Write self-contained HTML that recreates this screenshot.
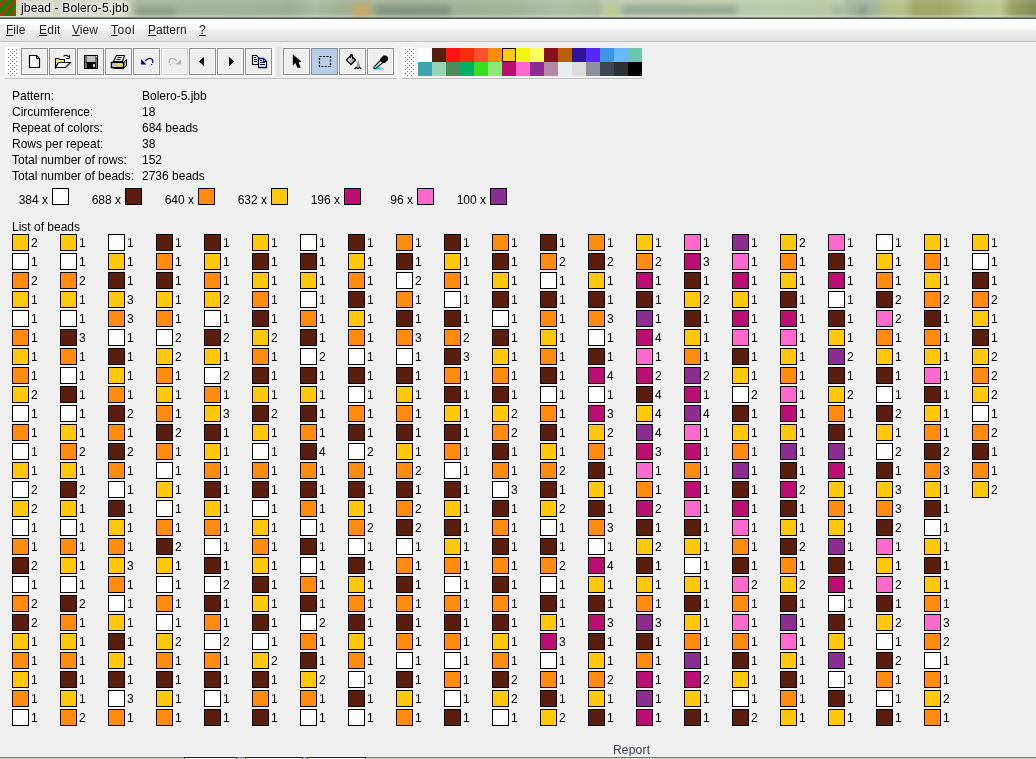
<!DOCTYPE html>
<html lang="en"><head><meta charset="utf-8"><title>jbead - Bolero-5.jbb</title>
<style>
*{margin:0;padding:0;box-sizing:border-box}
html,body{width:1036px;height:759px;overflow:hidden;background:#f0f0f0;font-family:"Liberation Sans",sans-serif;font-size:12px;color:#000}
body{position:relative}
#w{position:absolute;left:0;top:0;width:1036px;height:759px;will-change:transform}
.titlebar{position:absolute;left:0;top:0;width:1036px;height:19px;overflow:hidden;background:linear-gradient(90deg,#d2d4c6 0,#d2d4c6 118px,#a6b59d 138px,#a3b39a 256px,#9cae93 290px,#a9bca0 315px,#9eb195 345px,#a0b296 460px,#a4b69a 520px,#afc0a4 560px,#a6b89d 598px,#b8c7ab 604px,#bac9ab 700px,#bccbab 776px,#b9c8a6 840px,#a3b59c 850px,#a3b59c 874px,#b6c088 890px,#b8c18a 903px,#9fa76a 915px,#9ea669 940px,#a8b073 958px,#b8c28c 975px,#bcc690 1000px,#9aa268 1012px,#848c58 1036px)}
.titlebar:before{content:'';position:absolute;left:0;top:0;width:1036px;height:19px;background:linear-gradient(rgba(255,255,255,.10) 0,rgba(255,255,255,0) 6px,rgba(255,255,255,0) 14px,rgba(255,255,255,.28) 16px,rgba(255,255,255,.28) 17px,rgba(60,66,58,.0) 17px)}
.tline{position:absolute;left:0;top:17px;width:1036px;height:2px;background:linear-gradient(#7d8578 0,#7d8578 50%,#555b52 50%,#555b52 100%)}
.blob{position:absolute;filter:blur(3px);border-radius:3px;opacity:.85}
.appicon{position:absolute;left:0;top:0;width:16px;height:16px;background:repeating-linear-gradient(135deg,#0c880c 0,#0c880c 2.6px,#d62608 3.1px,#d62608 5.0px,#0c880c 5.5px,#0c880c 7.07px)}
.title{position:absolute;left:21px;top:0;font-size:12px;line-height:16px;letter-spacing:0.15px;color:#000;text-shadow:0 0 5px #fff,0 0 7px #fff,0 0 9px #fff}
.menubar{position:absolute;left:0;top:19px;width:1036px;height:23px;background:linear-gradient(#ffffff 0%,#f8f8f8 45%,#ebebeb 55%,#e2e2e2 100%);border-bottom:1px solid #c6c6c6}
.menubar span{position:absolute;top:4px;font-size:12px;line-height:14px;color:#222}
.tb1{position:absolute;left:5px;top:47px;width:392px;height:30px;background:linear-gradient(90deg,#ffffff 0,#ffffff 11px,#f7f7f7 16px,#f6f6f6 100%);box-shadow:0 2px 0 -0px #f0f0f0,0 2px 0 0 #f0f0f0}
.tb1:after,.tb2:after{content:'';position:absolute;left:0;right:0;top:31px;height:1px;background:#c2c2c2}
.tb2{position:absolute;left:402px;top:47px;width:242px;height:30px;background:linear-gradient(90deg,#ffffff 0,#ffffff 11px,#f3f3f3 16px,#f1f1f1 100%)}
.grip{position:absolute;left:3px;top:2px;width:9px;height:27px}
.btn{position:absolute;top:1px;width:27px;height:27px;border:1px solid #8e8e8e;background:#eeeeee;box-shadow:inset 0 0 0 1px #f8f8f8}
.btn.on{background:#b8cfe5;border-color:#7f8e9e;box-shadow:none}
.btn.dis{border-color:#cdcdcd}
.ico{position:absolute;left:0;top:0}
.sep{position:absolute;left:268px;top:0;width:10px;height:30px;background:linear-gradient(90deg,#fbfbfb,#dfdfdf 55%,#f4f4f4)}
.btn svg{position:absolute;left:0;top:0;width:25px;height:25px}
.pc{position:absolute;width:14px;height:14px;display:block}
.psel{position:absolute;left:100px;top:1px;width:14px;height:14px;border:1.5px solid #000;display:block}
.info .l{position:absolute;left:12px;height:16px;line-height:16px;white-space:nowrap}
.info .v{position:absolute;left:130px}
.cn{position:absolute;top:192px;width:60px;text-align:right;line-height:16px;white-space:nowrap}
.sw{position:absolute;width:17px;height:17px;border:1px solid #000;display:block}
.lob{position:absolute;left:12px;top:219px;line-height:16px}
.col{position:absolute;top:234px;width:40px}
.col p{height:19px;line-height:18px;white-space:nowrap;padding-left:19px;position:relative}
.col i{position:absolute;left:0;top:0;width:17px;height:17px;border:1px solid #000;display:block}
.W{background:#ffffff}.B{background:#5a1e0f}.O{background:#ff8c0f}.Y{background:#ffc80a}.M{background:#b90f73}.P{background:#ff69cd}.V{background:#8c2d91}
.report{position:absolute;left:613px;top:742px;line-height:16px;color:#333c48;font-size:12px;letter-spacing:0.2px}
.botline{position:absolute;left:0;top:756px;width:1036px;height:2px;background:linear-gradient(#f9f9f9 0,#f9f9f9 50%,#6e7762 50%,#6e7762 100%)}
.botline2{position:absolute;left:0;top:758px;width:1036px;height:1px;background:#d9dbc8}
.bx{position:absolute;top:757px;height:2px;background:#fff;border-top:1px solid #1c1c18;border-left:1px solid #555;border-right:1px solid #555}
</style></head>
<body>
<div id="w">
<div class="titlebar"><i class="blob" style="left:136px;top:8px;width:40px;height:6px;background:#7f917d"></i><i class="blob" style="left:353px;top:3px;width:18px;height:15px;background:#cfa763"></i><i class="blob" style="left:375px;top:7px;width:76px;height:7px;background:#6f8572"></i><i class="blob" style="left:606px;top:4px;width:10px;height:13px;background:#c8cc8a"></i><i class="blob" style="left:622px;top:7px;width:116px;height:6px;background:#7e9283"></i><i class="blob" style="left:834px;top:8px;width:6px;height:6px;background:#86968a"></i><i class="blob" style="left:858px;top:7px;width:9px;height:7px;background:#7a8a80"></i><div class="appicon"></div><span class="title">jbead - Bolero-5.jbb</span><div class="tline"></div></div>
<div class="menubar"><span style="left:6px"><u>F</u>ile</span><span style="left:39px;letter-spacing:.25px"><u>E</u>dit</span><span style="left:72px"><u>V</u>iew</span><span style="left:111px;letter-spacing:.55px"><u>T</u>ool</span><span style="left:148px"><u>P</u>attern</span><span style="left:199px"><u>?</u></span></div>
<div class="tb1"><svg class="grip" width="9" height="27" viewBox="0 0 9 27" shape-rendering="crispEdges"><defs><pattern id="gp1" width="4" height="4" patternUnits="userSpaceOnUse"><rect x="0" y="0" width="1" height="1" fill="#858585"/><rect x="2" y="2" width="1" height="1" fill="#858585"/></pattern></defs><rect width="9" height="27" fill="url(#gp1)"/></svg>
<div class="btn" style="left:16px"></div>
<div class="btn" style="left:44px"></div>
<div class="btn" style="left:72px"></div>
<div class="btn" style="left:100px"></div>
<div class="btn" style="left:128px"></div>
<div class="btn dis" style="left:156px"></div>
<div class="btn" style="left:184px"></div>
<div class="btn" style="left:212px"></div>
<div class="btn" style="left:240px"></div>
<div class="sep"></div>
<div class="btn" style="left:278px"></div>
<div class="btn on" style="left:306px"></div>
<div class="btn" style="left:334px"></div>
<div class="btn" style="left:362px"></div>
</div>
<svg class="ico" width="400" height="90" viewBox="0 0 400 90" fill="none" stroke-linecap="square">
<!-- new -->
<path d="M29.5 55.5H36.5L39.5 58.5V67.5H29.5Z" fill="#fff" stroke="#000" stroke-width="1.2"/>
<path d="M36.5 55.5V58.5H39.5" stroke="#000" stroke-width="1"/>
<!-- open -->
<path d="M55.5 67.5V58.5H58.5L59.5 59.5H64.5V62.5H58.5Z" fill="#f4f478" stroke="#000" stroke-width="1.1"/>
<path d="M55.5 67.5L58.5 62.5H70.5L65.5 67.5Z" fill="#fff" stroke="#000" stroke-width="1.1"/>
<path d="M63.5 56.5Q66 53.8 68.8 57" stroke="#000" stroke-width="1.1" stroke-linecap="butt"/>
<path d="M66.5 58.5H69.5V55.5" stroke="#000" stroke-width="1"/>
<!-- save -->
<rect x="84" y="55" width="14" height="14" fill="#000"/>
<rect x="85" y="56" width="12" height="12" fill="#6e6e6e"/>
<rect x="87" y="56" width="8" height="6" fill="#bdbdbd"/>
<rect x="86" y="62" width="10" height="1" fill="#000"/>
<rect x="87" y="63" width="9" height="5" fill="#000"/>
<rect x="93" y="64" width="2" height="3" fill="#c8c8c8"/>
<rect x="96" y="56" width="1" height="1" fill="#fff"/>
<!-- print -->
<path d="M123.5 62.5L126.5 59.5V65.5L123.5 68.5Z" fill="#a8a8a8" stroke="#000" stroke-width="1"/>
<path d="M113.5 61.5L116.5 55.5H124.5L122.5 61.5Z" fill="#fff" stroke="#000" stroke-width="1.1"/>
<path d="M117.5 57.5H121.5M116.5 59.5H120.5" stroke="#000" stroke-width="1" stroke-linecap="butt"/>
<path d="M111.5 62.5H123.5V67.5H111.5Z" fill="#fff" stroke="#000" stroke-width="1.5"/>
<rect x="112" y="64" width="11" height="2" fill="#c0c0c0"/>
<rect x="118" y="64" width="4" height="2" fill="#e4e438"/>
<path d="M112.5 67.5L113.5 68.5H123" stroke="#000" stroke-width="1"/>
<!-- undo -->
<path d="M141 59V64.5H146.5Z" fill="#000080"/>
<path d="M145 61Q148.5 57.5 151.5 58.8Q153.5 60.5 152.6 63" stroke="#000080" stroke-width="1.2" stroke-linecap="butt"/>
<rect x="151" y="64" width="1.2" height="1.2" fill="#000080"/>
<!-- redo -->
<path d="M181 59V64.5H175.5Z" fill="#b4b4b4"/>
<path d="M177 61Q173.5 57.5 170.5 58.8Q168.5 60.5 169.4 63" stroke="#b4b4b4" stroke-width="1.2" stroke-linecap="butt"/>
<rect x="169.8" y="64" width="1.2" height="1.2" fill="#b4b4b4"/>
<!-- left / right -->
<path d="M199 61.5L204 56.8V66.2Z" fill="#000"/>
<path d="M234.2 61.5L229 56.8V66.2Z" fill="#000"/>
<!-- copy -->
<path d="M252.5 55.5H256.5L258.5 57.5V64.5H252.5Z" fill="#fff" stroke="#000" stroke-width="1.2"/>
<path d="M254 57.5H256M254 59.5H257M254 61.5H257" stroke="#000" stroke-width="1" stroke-linecap="butt"/>
<path d="M258.5 58.5H263.5L266.5 61.5V67.5H258.5Z" fill="#fff" stroke="#000080" stroke-width="1.3"/>
<path d="M263.5 58.5V61.5H266.5" stroke="#000080" stroke-width="1"/>
<path d="M260 60.5H262M260 62.5H265M260 64.5H265" stroke="#000" stroke-width="1" stroke-linecap="butt"/>
<!-- pointer -->
<path d="M292.8 54.6V65.4L295.4 63L297.5 67.8H300.7L298.5 62.6L301.4 61.6Z" fill="#000"/>
<!-- select -->
<rect x="319.5" y="56.5" width="11" height="10" stroke="#000" stroke-width="1.2" stroke-dasharray="2 1.5" stroke-linecap="butt"/>
<!-- fill -->
<defs><linearGradient id="bk" x1="0" y1="0" x2="1" y2="0.6"><stop offset="0.25" stop-color="#fff"/><stop offset="1" stop-color="#6a6a6a"/></linearGradient></defs>
<path d="M346.3 60L351 55.3L355.7 60L351 64.7Z" fill="url(#bk)" stroke="#000" stroke-width="1.1"/>
<path d="M350.5 57.5V54.5H352.5V58.5" stroke="#000" stroke-width="0.9"/>
<path d="M356.5 60.5L358.5 62L360.5 67H357Z" fill="#c4c4c4"/>
<path d="M358.5 61V66M357.5 63.5V66.5M359.5 64V67" stroke="#8a8a8a" stroke-width="0.6" stroke-dasharray="1 1"/>
<path d="M355 68.7L356.5 67.3L358 68.7L359.5 67.3L361 68.7" stroke="#000" stroke-width="1.3"/>
<!-- pipette -->
<path d="M372.5 68.2L376 66.5L382.2 67.6L381.5 69.8H373.5Z" fill="#20e4ec"/>
<path d="M380.5 60.5L374 67L374 68.5L375.5 68.5L383 62.5Z" fill="#fff" stroke="#000" stroke-width="1.1"/>
<path d="M377.5 65L375 67.5L375.6 68L378.6 65.6Z" fill="#60e8f0"/>
<path d="M380.3 58.7L383.3 55.5H386.2L388 57.3V60L385.2 62.8L383.7 63.2L380 59.6Z" fill="#000"/>
</svg>
<div class="tb2"><svg class="grip" width="9" height="27" viewBox="0 0 9 27" shape-rendering="crispEdges"><defs><pattern id="gp2" width="4" height="4" patternUnits="userSpaceOnUse"><rect x="0" y="0" width="1" height="1" fill="#858585"/><rect x="2" y="2" width="1" height="1" fill="#858585"/></pattern></defs><rect width="9" height="27" fill="url(#gp2)"/></svg>
<i class="pc" style="left:16px;top:1px;background:#ffffff"></i><i class="pc" style="left:30px;top:1px;background:#5a1e0f"></i><i class="pc" style="left:44px;top:1px;background:#ff1414"></i><i class="pc" style="left:58px;top:1px;background:#f52d0a"></i><i class="pc" style="left:72px;top:1px;background:#ff502d"></i><i class="pc" style="left:86px;top:1px;background:#ff8c0f"></i><i class="pc" style="left:100px;top:1px;background:#ffc80a"></i><i class="pc" style="left:114px;top:1px;background:#f5f514"></i><i class="pc" style="left:128px;top:1px;background:#ffff64"></i><i class="pc" style="left:142px;top:1px;background:#8c0f1e"></i><i class="pc" style="left:156px;top:1px;background:#b95f05"></i><i class="pc" style="left:170px;top:1px;background:#2d149b"></i><i class="pc" style="left:184px;top:1px;background:#5528ff"></i><i class="pc" style="left:198px;top:1px;background:#3c96e6"></i><i class="pc" style="left:212px;top:1px;background:#69b9ff"></i><i class="pc" style="left:226px;top:1px;background:#69c8af"></i><i class="pc" style="left:16px;top:15px;background:#3ca5b4"></i><i class="pc" style="left:30px;top:15px;background:#96d2b4"></i><i class="pc" style="left:44px;top:15px;background:#4b8c5a"></i><i class="pc" style="left:58px;top:15px;background:#05af64"></i><i class="pc" style="left:72px;top:15px;background:#3cdc23"></i><i class="pc" style="left:86px;top:15px;background:#8ce678"></i><i class="pc" style="left:100px;top:15px;background:#b90f73"></i><i class="pc" style="left:114px;top:15px;background:#ff69cd"></i><i class="pc" style="left:128px;top:15px;background:#8c2d91"></i><i class="pc" style="left:142px;top:15px;background:#b487a5"></i><i class="pc" style="left:156px;top:15px;background:#e6eef0"></i><i class="pc" style="left:170px;top:15px;background:#dcdcdc"></i><i class="pc" style="left:184px;top:15px;background:#8c919b"></i><i class="pc" style="left:198px;top:15px;background:#3c4655"></i><i class="pc" style="left:212px;top:15px;background:#283237"></i><i class="pc" style="left:226px;top:15px;background:#000000"></i><i class="psel"></i></div>
<div class="info">
<div class="l" style="top:88px"><span class="k">Pattern:</span><span class="v">Bolero-5.jbb</span></div>
<div class="l" style="top:104px"><span class="k">Circumference:</span><span class="v">18</span></div>
<div class="l" style="top:120px"><span class="k">Repeat of colors:</span><span class="v">684 beads</span></div>
<div class="l" style="top:136px"><span class="k">Rows per repeat:</span><span class="v">38</span></div>
<div class="l" style="top:152px"><span class="k">Total number of rows:</span><span class="v">152</span></div>
<div class="l" style="top:168px"><span class="k">Total number of beads:</span><span class="v">2736 beads</span></div>
</div>
<div class="counts">
<span class="cn" style="left:-12px">384 x</span><i class="sw" style="left:52px;top:188px;background:#ffffff"></i>
<span class="cn" style="left:61px">688 x</span><i class="sw" style="left:125px;top:188px;background:#5a1e0f"></i>
<span class="cn" style="left:134px">640 x</span><i class="sw" style="left:198px;top:188px;background:#ff8c0f"></i>
<span class="cn" style="left:207px">632 x</span><i class="sw" style="left:271px;top:188px;background:#ffc80a"></i>
<span class="cn" style="left:280px">196 x</span><i class="sw" style="left:344px;top:188px;background:#b90f73"></i>
<span class="cn" style="left:353px">96 x</span><i class="sw" style="left:417px;top:188px;background:#ff69cd"></i>
<span class="cn" style="left:426px">100 x</span><i class="sw" style="left:490px;top:188px;background:#8c2d91"></i>
</div>
<div class="lob">List of beads</div>
<div class="beads">
<div class="col" style="left:12px"><p><i class="Y"></i>2</p><p><i class="W"></i>1</p><p><i class="O"></i>2</p><p><i class="Y"></i>1</p><p><i class="W"></i>1</p><p><i class="O"></i>1</p><p><i class="Y"></i>1</p><p><i class="O"></i>1</p><p><i class="Y"></i>2</p><p><i class="W"></i>1</p><p><i class="O"></i>1</p><p><i class="W"></i>1</p><p><i class="Y"></i>1</p><p><i class="W"></i>2</p><p><i class="Y"></i>2</p><p><i class="W"></i>1</p><p><i class="O"></i>1</p><p><i class="B"></i>2</p><p><i class="W"></i>1</p><p><i class="O"></i>2</p><p><i class="B"></i>2</p><p><i class="Y"></i>1</p><p><i class="O"></i>1</p><p><i class="Y"></i>1</p><p><i class="O"></i>1</p><p><i class="W"></i>1</p></div>
<div class="col" style="left:60px"><p><i class="Y"></i>1</p><p><i class="W"></i>1</p><p><i class="O"></i>2</p><p><i class="Y"></i>1</p><p><i class="W"></i>1</p><p><i class="B"></i>3</p><p><i class="O"></i>1</p><p><i class="W"></i>1</p><p><i class="B"></i>1</p><p><i class="W"></i>1</p><p><i class="Y"></i>1</p><p><i class="O"></i>2</p><p><i class="Y"></i>1</p><p><i class="B"></i>2</p><p><i class="Y"></i>1</p><p><i class="W"></i>1</p><p><i class="O"></i>1</p><p><i class="Y"></i>1</p><p><i class="W"></i>1</p><p><i class="B"></i>2</p><p><i class="O"></i>1</p><p><i class="Y"></i>1</p><p><i class="O"></i>1</p><p><i class="B"></i>1</p><p><i class="Y"></i>1</p><p><i class="O"></i>2</p></div>
<div class="col" style="left:108px"><p><i class="W"></i>1</p><p><i class="Y"></i>1</p><p><i class="B"></i>1</p><p><i class="Y"></i>3</p><p><i class="O"></i>3</p><p><i class="W"></i>1</p><p><i class="B"></i>1</p><p><i class="Y"></i>1</p><p><i class="O"></i>1</p><p><i class="B"></i>2</p><p><i class="O"></i>1</p><p><i class="B"></i>2</p><p><i class="O"></i>1</p><p><i class="W"></i>1</p><p><i class="B"></i>1</p><p><i class="Y"></i>1</p><p><i class="O"></i>1</p><p><i class="Y"></i>3</p><p><i class="O"></i>1</p><p><i class="W"></i>1</p><p><i class="Y"></i>1</p><p><i class="B"></i>1</p><p><i class="Y"></i>1</p><p><i class="B"></i>1</p><p><i class="W"></i>3</p><p><i class="O"></i>1</p></div>
<div class="col" style="left:156px"><p><i class="B"></i>1</p><p><i class="O"></i>1</p><p><i class="B"></i>1</p><p><i class="Y"></i>1</p><p><i class="O"></i>1</p><p><i class="W"></i>2</p><p><i class="Y"></i>2</p><p><i class="O"></i>1</p><p><i class="Y"></i>1</p><p><i class="O"></i>1</p><p><i class="B"></i>2</p><p><i class="O"></i>1</p><p><i class="W"></i>1</p><p><i class="Y"></i>1</p><p><i class="W"></i>1</p><p><i class="O"></i>1</p><p><i class="B"></i>2</p><p><i class="Y"></i>1</p><p><i class="W"></i>1</p><p><i class="O"></i>1</p><p><i class="W"></i>1</p><p><i class="Y"></i>2</p><p><i class="O"></i>1</p><p><i class="B"></i>1</p><p><i class="Y"></i>1</p><p><i class="O"></i>1</p></div>
<div class="col" style="left:204px"><p><i class="B"></i>1</p><p><i class="Y"></i>1</p><p><i class="O"></i>1</p><p><i class="Y"></i>2</p><p><i class="W"></i>1</p><p><i class="B"></i>2</p><p><i class="Y"></i>1</p><p><i class="W"></i>2</p><p><i class="O"></i>1</p><p><i class="Y"></i>3</p><p><i class="B"></i>1</p><p><i class="Y"></i>1</p><p><i class="O"></i>1</p><p><i class="B"></i>1</p><p><i class="Y"></i>1</p><p><i class="O"></i>1</p><p><i class="W"></i>1</p><p><i class="B"></i>1</p><p><i class="W"></i>2</p><p><i class="B"></i>1</p><p><i class="O"></i>1</p><p><i class="W"></i>2</p><p><i class="O"></i>1</p><p><i class="B"></i>1</p><p><i class="W"></i>1</p><p><i class="B"></i>1</p></div>
<div class="col" style="left:252px"><p><i class="Y"></i>1</p><p><i class="B"></i>1</p><p><i class="Y"></i>1</p><p><i class="O"></i>1</p><p><i class="B"></i>1</p><p><i class="Y"></i>2</p><p><i class="O"></i>1</p><p><i class="B"></i>1</p><p><i class="Y"></i>1</p><p><i class="B"></i>2</p><p><i class="Y"></i>1</p><p><i class="W"></i>1</p><p><i class="O"></i>1</p><p><i class="B"></i>1</p><p><i class="W"></i>1</p><p><i class="Y"></i>1</p><p><i class="O"></i>1</p><p><i class="Y"></i>1</p><p><i class="B"></i>1</p><p><i class="Y"></i>1</p><p><i class="B"></i>1</p><p><i class="W"></i>1</p><p><i class="Y"></i>2</p><p><i class="B"></i>1</p><p><i class="O"></i>1</p><p><i class="B"></i>1</p></div>
<div class="col" style="left:300px"><p><i class="W"></i>1</p><p><i class="B"></i>1</p><p><i class="Y"></i>1</p><p><i class="W"></i>1</p><p><i class="O"></i>1</p><p><i class="B"></i>1</p><p><i class="W"></i>2</p><p><i class="B"></i>1</p><p><i class="Y"></i>1</p><p><i class="B"></i>1</p><p><i class="O"></i>1</p><p><i class="B"></i>4</p><p><i class="O"></i>1</p><p><i class="B"></i>1</p><p><i class="O"></i>1</p><p><i class="W"></i>1</p><p><i class="B"></i>1</p><p><i class="W"></i>1</p><p><i class="O"></i>1</p><p><i class="B"></i>1</p><p><i class="W"></i>2</p><p><i class="O"></i>1</p><p><i class="B"></i>1</p><p><i class="Y"></i>2</p><p><i class="O"></i>1</p><p><i class="W"></i>1</p></div>
<div class="col" style="left:348px"><p><i class="B"></i>1</p><p><i class="Y"></i>1</p><p><i class="O"></i>1</p><p><i class="B"></i>1</p><p><i class="Y"></i>1</p><p><i class="O"></i>1</p><p><i class="W"></i>1</p><p><i class="B"></i>1</p><p><i class="W"></i>1</p><p><i class="O"></i>1</p><p><i class="B"></i>1</p><p><i class="W"></i>2</p><p><i class="O"></i>1</p><p><i class="B"></i>1</p><p><i class="Y"></i>1</p><p><i class="O"></i>2</p><p><i class="W"></i>1</p><p><i class="B"></i>1</p><p><i class="Y"></i>1</p><p><i class="O"></i>1</p><p><i class="B"></i>1</p><p><i class="Y"></i>1</p><p><i class="O"></i>1</p><p><i class="W"></i>1</p><p><i class="B"></i>1</p><p><i class="W"></i>1</p></div>
<div class="col" style="left:396px"><p><i class="O"></i>1</p><p><i class="B"></i>1</p><p><i class="W"></i>2</p><p><i class="O"></i>1</p><p><i class="B"></i>1</p><p><i class="O"></i>3</p><p><i class="W"></i>1</p><p><i class="B"></i>1</p><p><i class="Y"></i>1</p><p><i class="O"></i>1</p><p><i class="B"></i>1</p><p><i class="Y"></i>1</p><p><i class="O"></i>2</p><p><i class="B"></i>1</p><p><i class="O"></i>2</p><p><i class="B"></i>2</p><p><i class="W"></i>1</p><p><i class="O"></i>1</p><p><i class="B"></i>1</p><p><i class="O"></i>1</p><p><i class="B"></i>1</p><p><i class="O"></i>1</p><p><i class="W"></i>1</p><p><i class="B"></i>1</p><p><i class="Y"></i>1</p><p><i class="O"></i>1</p></div>
<div class="col" style="left:444px"><p><i class="B"></i>1</p><p><i class="Y"></i>1</p><p><i class="O"></i>1</p><p><i class="W"></i>1</p><p><i class="B"></i>1</p><p><i class="O"></i>2</p><p><i class="B"></i>3</p><p><i class="O"></i>1</p><p><i class="B"></i>1</p><p><i class="Y"></i>1</p><p><i class="B"></i>1</p><p><i class="O"></i>1</p><p><i class="W"></i>1</p><p><i class="B"></i>1</p><p><i class="Y"></i>1</p><p><i class="B"></i>1</p><p><i class="Y"></i>1</p><p><i class="O"></i>1</p><p><i class="W"></i>1</p><p><i class="O"></i>1</p><p><i class="B"></i>1</p><p><i class="O"></i>1</p><p><i class="W"></i>1</p><p><i class="O"></i>1</p><p><i class="W"></i>1</p><p><i class="B"></i>1</p></div>
<div class="col" style="left:492px"><p><i class="O"></i>1</p><p><i class="B"></i>1</p><p><i class="Y"></i>1</p><p><i class="B"></i>1</p><p><i class="W"></i>1</p><p><i class="B"></i>1</p><p><i class="Y"></i>1</p><p><i class="O"></i>1</p><p><i class="B"></i>1</p><p><i class="Y"></i>2</p><p><i class="O"></i>2</p><p><i class="B"></i>1</p><p><i class="O"></i>1</p><p><i class="W"></i>3</p><p><i class="B"></i>1</p><p><i class="O"></i>1</p><p><i class="B"></i>1</p><p><i class="O"></i>1</p><p><i class="B"></i>1</p><p><i class="O"></i>1</p><p><i class="B"></i>1</p><p><i class="Y"></i>1</p><p><i class="O"></i>1</p><p><i class="B"></i>2</p><p><i class="Y"></i>2</p><p><i class="W"></i>1</p></div>
<div class="col" style="left:540px"><p><i class="B"></i>1</p><p><i class="O"></i>2</p><p><i class="W"></i>1</p><p><i class="B"></i>1</p><p><i class="O"></i>1</p><p><i class="Y"></i>1</p><p><i class="O"></i>1</p><p><i class="B"></i>1</p><p><i class="W"></i>1</p><p><i class="O"></i>1</p><p><i class="B"></i>1</p><p><i class="Y"></i>1</p><p><i class="O"></i>2</p><p><i class="B"></i>1</p><p><i class="Y"></i>2</p><p><i class="W"></i>1</p><p><i class="B"></i>1</p><p><i class="O"></i>2</p><p><i class="W"></i>1</p><p><i class="B"></i>1</p><p><i class="Y"></i>1</p><p><i class="M"></i>3</p><p><i class="W"></i>1</p><p><i class="O"></i>1</p><p><i class="B"></i>1</p><p><i class="Y"></i>2</p></div>
<div class="col" style="left:588px"><p><i class="O"></i>1</p><p><i class="B"></i>2</p><p><i class="Y"></i>1</p><p><i class="B"></i>1</p><p><i class="O"></i>3</p><p><i class="W"></i>1</p><p><i class="B"></i>1</p><p><i class="M"></i>4</p><p><i class="W"></i>1</p><p><i class="M"></i>3</p><p><i class="Y"></i>2</p><p><i class="O"></i>1</p><p><i class="B"></i>1</p><p><i class="Y"></i>1</p><p><i class="B"></i>1</p><p><i class="O"></i>3</p><p><i class="W"></i>1</p><p><i class="M"></i>4</p><p><i class="Y"></i>1</p><p><i class="B"></i>1</p><p><i class="M"></i>3</p><p><i class="B"></i>1</p><p><i class="Y"></i>1</p><p><i class="O"></i>2</p><p><i class="Y"></i>1</p><p><i class="B"></i>1</p></div>
<div class="col" style="left:636px"><p><i class="Y"></i>1</p><p><i class="O"></i>2</p><p><i class="M"></i>1</p><p><i class="B"></i>1</p><p><i class="V"></i>1</p><p><i class="M"></i>4</p><p><i class="P"></i>1</p><p><i class="M"></i>2</p><p><i class="B"></i>4</p><p><i class="Y"></i>4</p><p><i class="V"></i>4</p><p><i class="M"></i>3</p><p><i class="P"></i>1</p><p><i class="O"></i>1</p><p><i class="M"></i>2</p><p><i class="B"></i>1</p><p><i class="Y"></i>2</p><p><i class="B"></i>1</p><p><i class="Y"></i>1</p><p><i class="O"></i>1</p><p><i class="V"></i>3</p><p><i class="B"></i>1</p><p><i class="O"></i>1</p><p><i class="M"></i>1</p><p><i class="V"></i>1</p><p><i class="M"></i>1</p></div>
<div class="col" style="left:684px"><p><i class="P"></i>1</p><p><i class="M"></i>3</p><p><i class="B"></i>1</p><p><i class="Y"></i>2</p><p><i class="B"></i>1</p><p><i class="Y"></i>1</p><p><i class="O"></i>1</p><p><i class="V"></i>2</p><p><i class="M"></i>1</p><p><i class="V"></i>4</p><p><i class="P"></i>1</p><p><i class="M"></i>1</p><p><i class="O"></i>1</p><p><i class="M"></i>1</p><p><i class="P"></i>1</p><p><i class="B"></i>1</p><p><i class="Y"></i>1</p><p><i class="W"></i>1</p><p><i class="Y"></i>1</p><p><i class="B"></i>1</p><p><i class="Y"></i>1</p><p><i class="O"></i>1</p><p><i class="V"></i>1</p><p><i class="M"></i>2</p><p><i class="Y"></i>1</p><p><i class="B"></i>1</p></div>
<div class="col" style="left:732px"><p><i class="V"></i>1</p><p><i class="P"></i>1</p><p><i class="M"></i>1</p><p><i class="Y"></i>1</p><p><i class="M"></i>1</p><p><i class="P"></i>1</p><p><i class="B"></i>1</p><p><i class="Y"></i>1</p><p><i class="W"></i>2</p><p><i class="B"></i>1</p><p><i class="Y"></i>1</p><p><i class="O"></i>1</p><p><i class="V"></i>1</p><p><i class="B"></i>1</p><p><i class="M"></i>1</p><p><i class="P"></i>1</p><p><i class="O"></i>1</p><p><i class="B"></i>1</p><p><i class="P"></i>2</p><p><i class="O"></i>1</p><p><i class="P"></i>1</p><p><i class="O"></i>1</p><p><i class="B"></i>1</p><p><i class="Y"></i>1</p><p><i class="W"></i>1</p><p><i class="B"></i>2</p></div>
<div class="col" style="left:780px"><p><i class="Y"></i>2</p><p><i class="O"></i>1</p><p><i class="Y"></i>1</p><p><i class="B"></i>1</p><p><i class="M"></i>1</p><p><i class="P"></i>1</p><p><i class="Y"></i>1</p><p><i class="O"></i>1</p><p><i class="P"></i>1</p><p><i class="M"></i>1</p><p><i class="Y"></i>1</p><p><i class="V"></i>1</p><p><i class="B"></i>1</p><p><i class="M"></i>2</p><p><i class="B"></i>1</p><p><i class="Y"></i>1</p><p><i class="B"></i>2</p><p><i class="O"></i>1</p><p><i class="Y"></i>2</p><p><i class="B"></i>1</p><p><i class="V"></i>1</p><p><i class="P"></i>1</p><p><i class="Y"></i>1</p><p><i class="B"></i>1</p><p><i class="O"></i>1</p><p><i class="Y"></i>1</p></div>
<div class="col" style="left:828px"><p><i class="P"></i>1</p><p><i class="B"></i>1</p><p><i class="M"></i>1</p><p><i class="W"></i>1</p><p><i class="B"></i>1</p><p><i class="Y"></i>1</p><p><i class="V"></i>2</p><p><i class="B"></i>1</p><p><i class="Y"></i>2</p><p><i class="O"></i>1</p><p><i class="B"></i>1</p><p><i class="V"></i>1</p><p><i class="M"></i>1</p><p><i class="Y"></i>1</p><p><i class="O"></i>1</p><p><i class="Y"></i>1</p><p><i class="V"></i>1</p><p><i class="B"></i>1</p><p><i class="M"></i>1</p><p><i class="W"></i>1</p><p><i class="B"></i>1</p><p><i class="Y"></i>1</p><p><i class="V"></i>1</p><p><i class="W"></i>1</p><p><i class="B"></i>1</p><p><i class="Y"></i>1</p></div>
<div class="col" style="left:876px"><p><i class="W"></i>1</p><p><i class="Y"></i>1</p><p><i class="O"></i>1</p><p><i class="B"></i>2</p><p><i class="P"></i>2</p><p><i class="O"></i>1</p><p><i class="Y"></i>1</p><p><i class="B"></i>1</p><p><i class="W"></i>1</p><p><i class="B"></i>2</p><p><i class="Y"></i>1</p><p><i class="W"></i>2</p><p><i class="B"></i>1</p><p><i class="Y"></i>3</p><p><i class="O"></i>3</p><p><i class="B"></i>2</p><p><i class="P"></i>1</p><p><i class="Y"></i>1</p><p><i class="P"></i>2</p><p><i class="B"></i>1</p><p><i class="Y"></i>2</p><p><i class="W"></i>1</p><p><i class="B"></i>2</p><p><i class="O"></i>1</p><p><i class="W"></i>1</p><p><i class="B"></i>1</p></div>
<div class="col" style="left:924px"><p><i class="Y"></i>1</p><p><i class="O"></i>1</p><p><i class="Y"></i>1</p><p><i class="O"></i>2</p><p><i class="B"></i>1</p><p><i class="O"></i>1</p><p><i class="Y"></i>1</p><p><i class="P"></i>1</p><p><i class="B"></i>1</p><p><i class="Y"></i>1</p><p><i class="O"></i>1</p><p><i class="B"></i>2</p><p><i class="O"></i>3</p><p><i class="Y"></i>1</p><p><i class="B"></i>1</p><p><i class="W"></i>1</p><p><i class="Y"></i>1</p><p><i class="B"></i>1</p><p><i class="Y"></i>1</p><p><i class="O"></i>1</p><p><i class="P"></i>3</p><p><i class="O"></i>2</p><p><i class="W"></i>1</p><p><i class="O"></i>1</p><p><i class="Y"></i>2</p><p><i class="O"></i>1</p></div>
<div class="col" style="left:972px"><p><i class="Y"></i>1</p><p><i class="W"></i>1</p><p><i class="B"></i>1</p><p><i class="O"></i>2</p><p><i class="Y"></i>1</p><p><i class="B"></i>1</p><p><i class="Y"></i>2</p><p><i class="O"></i>2</p><p><i class="Y"></i>2</p><p><i class="W"></i>1</p><p><i class="O"></i>2</p><p><i class="B"></i>1</p><p><i class="O"></i>1</p><p><i class="Y"></i>2</p></div>
</div>
<div class="report">Report</div>
<div class="botline"></div><div class="botline2"></div><i class="bx" style="left:184px;width:53px"></i><i class="bx" style="left:245px;width:58px"></i><i class="bx" style="left:307px;width:59px"></i>
</div>
</body></html>
